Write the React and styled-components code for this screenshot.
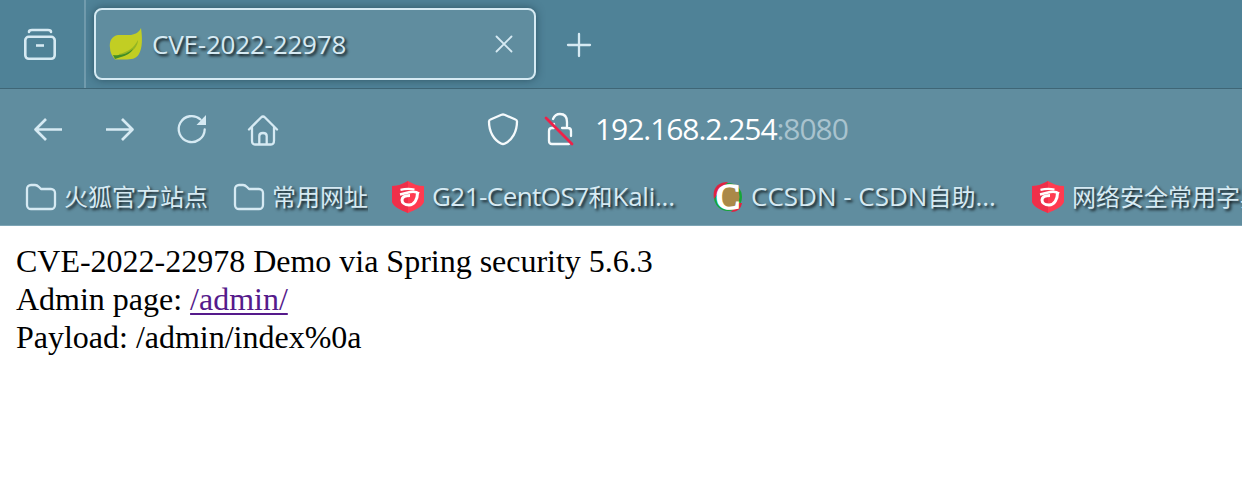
import React from "react";
import styled, { createGlobalStyle } from "styled-components";

const ink = "#d6eaf3";
const uiFont = `"Open Sans", "Noto Sans CJK SC", sans-serif`;

const GlobalStyle = createGlobalStyle`
  body { margin: 0; background: #fff; overflow: hidden; }
  svg { display: block; flex: none; overflow: visible; }
`;

const Window = styled.div`
  width: 100%;
  height: 486px;
  overflow: hidden;
  font-family: ${uiFont};
  color: ${ink};
`;

const TabStrip = styled.header`
  display: flex;
  box-sizing: border-box;
  height: 89px;
  background: #4f8297;
  border-bottom: 1px solid #3f6676;
`;

const TabManager = styled.div`
  box-sizing: border-box;
  width: 86px;
  height: 88px;
  padding: 28px 0 0 23px;
  border-right: 2px solid #719bad;
`;

const Tab = styled.div`
  box-sizing: border-box;
  display: flex;
  align-items: center;
  width: 442px;
  height: 72px;
  margin: 8px 0 0 8px;
  padding: 0 21px 0 13px;
  border: 2px solid ${ink};
  border-radius: 8px;
  background: #608d9f;
  box-shadow: 0 0 8px rgba(20, 45, 60, 0.55);
`;

const Label = styled.span`
  font-size: 24px;
  line-height: 36px;
  white-space: nowrap;
  text-shadow: 2px 2px 3px rgba(0, 0, 0, 0.85);
`;

const Latin = styled.span`
  font-size: 26px;
  line-height: 1;
  letter-spacing: ${(p) => p.$spacing || 0}px;
`;

const TabTitle = styled(Label)`
  flex: 1;
  margin-left: 9px;
  padding-bottom: 1px;
  font-size: 26px;
  letter-spacing: -0.2px;
`;

const NewTab = styled.div`
  padding: 33px 0 0 31px;
`;

const NavBar = styled.nav`
  display: flex;
  align-items: center;
  height: 80px;
  padding-left: 32px;
  background: #608d9f;
`;

const NavButtons = styled.div`
  display: flex;
  gap: 40px;
  width: 454px;
`;

const Address = styled.div`
  display: flex;
  align-items: center;
  gap: 20px;
  color: #fff;
`;

const Url = styled.span`
  margin-left: 1px;
  font-size: 30px;
  line-height: 40px;
  letter-spacing: -1.05px;
  white-space: nowrap;
`;

const Port = styled.span`
  color: #a9c3ce;
`;

const Bookmarks = styled.div`
  display: flex;
  box-sizing: border-box;
  height: 57px;
  padding: 10px 0 0 25px;
  background: #608d9f;
  border-bottom: 1px solid #7ea5b5;
  overflow: hidden;
`;

const Bookmark = styled.div`
  display: flex;
  align-items: center;
  flex: none;
  height: 36px;
  width: ${(p) => p.$width}px;
  margin-right: ${(p) => p.$gap}px;
  gap: 8px;
  overflow: hidden;
`;

const Page = styled.main`
  padding: 16px;
  color: #000;
  font: 32px/38px "Liberation Serif", serif;
  letter-spacing: -0.01px;
`;

const Link = styled.a`
  color: #551a8b;
  text-decoration: underline;
  text-decoration-thickness: 2px;
  text-underline-offset: 3px;
`;

const Stroke = ({ w, h, sw = 2.3, color = ink, children }) => (
  <svg width={w} height={h} viewBox={`0 0 ${w} ${h}`} fill="none" stroke={color}
    strokeWidth={sw} strokeLinecap="round" strokeLinejoin="round">
    {children}
  </svg>
);

const Leaf = () => (
  <svg width="34" height="34" viewBox="0 0 34 34">
    <path d="M1 21C0 14 3 9 9 8h13c5-1 8-3 10-7 1.500 10 1.500 20-2 26-3 5-8 5.500-14 5.500H6C3 29 1 25 1 21Z" fill="#c2ce23" />
    <path d="M10 27c9-2 15-6 19-14 0 6-5 11-10 14-3 2-7 3-10 3Z" fill="#93b524" />
    <path d="M4 28c8 1 14-1 20-6-3 5-8 7-12 8l-6 2Z" fill="#418d27" />
  </svg>
);

const Folder = () => (
  <Stroke w={31} h={30}>
    <path d="M2 7a4 4 0 0 1 4-4h4c2 0 3 1 4 2l2 2h10a4 4 0 0 1 4 4v12a4 4 0 0 1-4 4H6a4 4 0 0 1-4-4Z" />
  </Stroke>
);

const RedShield = () => (
  <svg width="32" height="32" viewBox="0 0 32 32">
    <path d="M16 0c5 3 10 5 16 5v16c-2 5-9 8-16 11C9 29 2 26 0 21V5c6 0 11-2 16-5Z" fill="#ff3b50" />
    <path d="M16 0v32C9 29 2 26 0 21V5c6 0 11-2 16-5Z" fill="#ee2f4a" />
    <g fill="none" stroke="#fff">
      <path d="M8.500 8.800q7-1.500 14-.3" strokeWidth="2.2" />
      <path d="M8 13.500q4-.8 8-2 7-2 11 1" strokeWidth="2.600" />
      <path d="M25.500 12c0 6-3 12-8.500 12-4.500 0-7-2.500-7-5 0-3 3.500-4.500 8-4.500" strokeWidth="3" />
    </g>
  </svg>
);

const CIcon = () => (
  <svg width="30" height="32" viewBox="0 0 30 32">
    <circle cx="15" cy="16" r="14" fill="#16a538" />
    <path d="M1 18C-1 7 5 1 15 1L8 8ZM29 22c-1 6-5 9-11 9l8-9Z" fill="#df2340" />
    <ellipse cx="17" cy="16" rx="9.500" ry="13" fill="#aa8948" />
    <text x="3" y="27.500" fill="#fff" stroke="#fff" strokeWidth="1.700" fontFamily="Liberation Serif, serif" fontSize="35" textLength="24" lengthAdjust="spacingAndGlyphs">C</text>
  </svg>
);

export default function App() {
  return (
    <Window>
      <GlobalStyle />
      <TabStrip>
        <TabManager>
          <Stroke w={34} h={34} sw={2.6}>
            <path d="M6 4q0-2 3-2h16q3 0 3 2" />
            <rect x="2.3" y="8.8" width="29.4" height="22" rx="3.5" />
            <path d="M13 17.500h8" strokeLinecap="butt" />
          </Stroke>
        </TabManager>
        <Tab>
          <Leaf />
          <TabTitle>CVE-2022-22978</TabTitle>
          <Stroke w={18} h={18} sw={1.8}><path d="m1.5 1.5 15 15m0-15-15 15" /></Stroke>
        </Tab>
        <NewTab>
          <Stroke w={24} h={24}><path d="M12 1v22M1 12h22" /></Stroke>
        </NewTab>
      </TabStrip>
      <NavBar>
        <NavButtons>
          <Stroke w={32} h={32} sw={2.7}><path d="M14 6 3.500 16.500 14 27M3 16.500h27" strokeLinecap="butt" /></Stroke>
          <Stroke w={32} h={32} sw={2.7}><path d="m18 6 10.500 10.500L18 27M29 16.500H2" strokeLinecap="butt" /></Stroke>
          <Stroke w={32} h={32}>
            <path d="M28.7 16.500A13 13 0 1 1 24.500 6.500" />
            <path d="M30 2v10h-9.500Z" fill={ink} stroke="none" />
          </Stroke>
          <Stroke w={32} h={32}>
            <path d="M1 16.500 13 4.500q2-2 4 0l12 12M4 14.500v13q0 4 3 4h16q3 0 3-4v-13M11.300 31v-8q0-3 3.700-3t3.700 3v8" />
          </Stroke>
        </NavButtons>
        <Address>
          <Stroke w={34} h={34} color="#f5fafc">
            <path d="m18.500 2.800 11 4.700q1.500.5 1.500 2C31 20 26 28 19 31.500q-2 1-4 0C8 28 3 20 3 9.500q0-1.500 1.500-2l11-4.700q1.500-.6 3 0Z" />
          </Stroke>
          <Stroke w={34} h={34} color="#f5fafc">
            <path d="M13 7q2-5 7-5 7 0 7 8v6h1q3 0 3 3v5M13.500 16H12q-3 0-3 3v10q0 3 3 3h17M14 12v4M22 16h5" />
            <path d="m6 6 26 26" stroke="#ee2149" strokeWidth="2.8" />
          </Stroke>
          <Url>192.168.2.254<Port>:8080</Port></Url>
        </Address>
      </NavBar>
      <Bookmarks>
        <Bookmark $width={184} $gap={24}><Folder /><Label>火狐官方站点</Label></Bookmark>
        <Bookmark $width={135} $gap={24}><Folder /><Label>常用网址</Label></Bookmark>
        <Bookmark $width={290} $gap={31}>
          <RedShield />
          <Label><Latin $spacing={-0.55}>G21-CentOS7</Latin>和<Latin $spacing={-0.25}>Kali...</Latin></Label>
        </Bookmark>
        <Bookmark $width={290} $gap={29}>
          <CIcon />
          <Label><Latin>CCSDN - CSDN</Latin>自助<Latin>...</Latin></Label>
        </Bookmark>
        <Bookmark $width={240} $gap={0}><RedShield /><Label>网络安全常用字典</Label></Bookmark>
      </Bookmarks>
      <Page>
        <div>CVE-2022-22978 Demo via Spring security 5.6.3</div>
        <div>Admin page: <Link>/admin/</Link></div>
        <div>Payload: /admin/index%0a</div>
      </Page>
    </Window>
  );
}
